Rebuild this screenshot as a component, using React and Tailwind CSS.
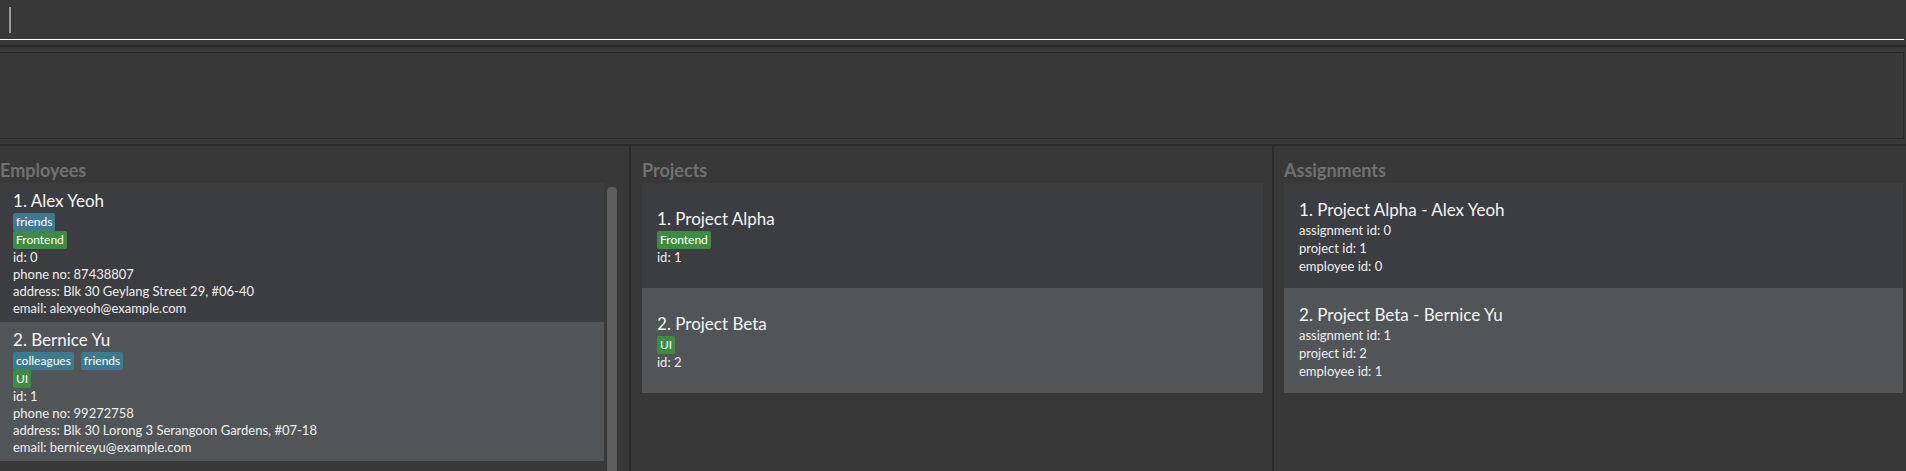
import React from "react";

const employees = [
  {
    name: "Alex Yeoh",
    tags: ["friends"],
    roles: ["Frontend"],
    id: 0,
    phone: "87438807",
    address: "Blk 30 Geylang Street 29, #06-40",
    email: "alexyeoh@example.com",
  },
  {
    name: "Bernice Yu",
    tags: ["colleagues", "friends"],
    roles: ["UI"],
    id: 1,
    phone: "99272758",
    address: "Blk 30 Lorong 3 Serangoon Gardens, #07-18",
    email: "berniceyu@example.com",
  },
];

const projects = [
  { name: "Project Alpha", tag: "Frontend", id: 1 },
  { name: "Project Beta", tag: "UI", id: 2 },
];

const assignments = [
  { title: "Project Alpha - Alex Yeoh", aid: 0, pid: 1, eid: 0 },
  { title: "Project Beta - Bernice Yu", aid: 1, pid: 2, eid: 1 },
];

const cardBg = (i) => (i % 2 === 0 ? "bg-[#3c3d40]" : "bg-[#515558]");

function Heading({ children }) {
  return (
    <div className="h-[37px] pt-[12px] text-[18px] leading-[24px] font-bold text-[#707070] whitespace-nowrap">
      {children}
    </div>
  );
}

function Tag({ children, color }) {
  return (
    <span
      className={`h-[18px] px-[3px] rounded-[2px] text-[12px] leading-[18px] text-white ${color}`}
    >
      {children}
    </span>
  );
}

export default function App() {
  return (
    <div className="w-[1906px] h-[471px] overflow-hidden bg-[#383838] flex flex-col font-['Lato',sans-serif] text-[#efefef]">
      {/* Command box */}
      <div className="h-[40px] w-[1904px] border-b border-white pl-[9px] pt-[7px]">
        <div className="w-[2px] h-[26px] bg-[#9c9c9c]" />
      </div>
      <div className="h-[5px]" />
      <div className="h-[2px] bg-[#2b2b2b]" />
      <div className="h-[5px]" />

      {/* Result box */}
      <div className="h-[87px] w-[1904px] border border-l-0 border-[#2a2a2a]" />
      <div className="h-[5px]" />
      <div className="h-[2px] bg-[#2b2b2b]" />

      {/* Panels */}
      <div className="flex-1 flex">
        {/* Employees */}
        <div className="w-[629px] flex flex-col">
          <Heading>Employees</Heading>
          <div className="flex flex-1">
            <div className="w-[604px] flex flex-col">
              {employees.map((e, i) => (
                <div key={e.id} className={`${cardBg(i)} pl-[13px] pt-[6px] pb-[5px]`}>
                  <div className="h-[24px] text-[17px] leading-[24px] text-[#f4f4f4]">
                    {i + 1}. {e.name}
                  </div>
                  <div className="flex gap-[7px] h-[18px]">
                    {e.tags.map((t) => (
                      <Tag key={t} color="bg-[#3d7a90]">
                        {t}
                      </Tag>
                    ))}
                  </div>
                  <div className="flex gap-[7px] h-[18px]">
                    {e.roles.map((t) => (
                      <Tag key={t} color="bg-[#3c8d43]">
                        {t}
                      </Tag>
                    ))}
                  </div>
                  <div className="text-[13px] leading-[17px]">
                    <div>id: {e.id}</div>
                    <div>phone no: {e.phone}</div>
                    <div>address: {e.address}</div>
                    <div>email: {e.email}</div>
                  </div>
                </div>
              ))}
            </div>
            <div className="ml-[3px] pt-[4px] w-[10px]">
              <div className="h-full rounded-t-[4px] bg-[#5d5d5d]" />
            </div>
          </div>
        </div>

        <div className="w-[2px] bg-[#2a2a2a]" />

        {/* Projects */}
        <div className="w-[641px] pl-[11px] pr-[9px] flex flex-col">
          <Heading>Projects</Heading>
          {projects.map((p, i) => (
            <div key={p.id} className={`${cardBg(i)} h-[105px] pl-[15px] pt-[24px]`}>
              <div className="h-[24px] text-[17px] leading-[24px] text-[#f4f4f4]">
                {i + 1}. {p.name}
              </div>
              <div className="flex h-[18px]">
                <Tag color="bg-[#3c8d43]">{p.tag}</Tag>
              </div>
              <div className="text-[13px] leading-[17px]">id: {p.id}</div>
            </div>
          ))}
        </div>

        <div className="w-[2px] bg-[#2a2a2a]" />

        {/* Assignments */}
        <div className="flex-1 pl-[10px] pr-[3px] flex flex-col">
          <Heading>Assignments</Heading>
          {assignments.map((a, i) => (
            <div key={a.aid} className={`${cardBg(i)} h-[105px] pl-[15px] pt-[16px]`}>
              <div className="h-[22px] text-[17px] leading-[22px] text-[#f4f4f4]">
                {i + 1}. {a.title}
              </div>
              <div className="text-[13px] leading-[18px]">
                <div>assignment id: {a.aid}</div>
                <div>project id: {a.pid}</div>
                <div>employee id: {a.eid}</div>
              </div>
            </div>
          ))}
        </div>
      </div>
    </div>
  );
}
